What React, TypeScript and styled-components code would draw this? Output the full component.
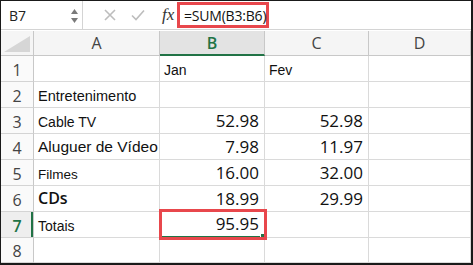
import React from 'react';
import styled, { createGlobalStyle, css } from 'styled-components';

const GlobalStyle = createGlobalStyle`
  html, body {
    margin: 0;
    padding: 0;
    background: #fff;
  }
  body {
    font-family: "Liberation Sans", Arial, sans-serif;
  }
`;

const GREEN = '#217346';
const RED = '#e8474c';

type Variant = 'text' | 'large' | 'num' | 'bold';

interface CellData {
  value: string;
  variant: Variant;
  size?: number;
}

interface RowData {
  n: number;
  a?: CellData;
  b?: CellData;
  c?: CellData;
}

const rows: RowData[] = [
  { n: 1, b: { value: 'Jan', variant: 'text' }, c: { value: 'Fev', variant: 'text' } },
  { n: 2, a: { value: 'Entretenimento', variant: 'large', size: 14.5 } },
  {
    n: 3,
    a: { value: 'Cable TV', variant: 'text' },
    b: { value: '52.98', variant: 'num' },
    c: { value: '52.98', variant: 'num' },
  },
  {
    n: 4,
    a: { value: 'Aluguer de Vídeo', variant: 'large', size: 15.5 },
    b: { value: '7.98', variant: 'num' },
    c: { value: '11.97', variant: 'num' },
  },
  {
    n: 5,
    a: { value: 'Filmes', variant: 'text', size: 13.5 },
    b: { value: '16.00', variant: 'num' },
    c: { value: '32.00', variant: 'num' },
  },
  {
    n: 6,
    a: { value: 'CDs', variant: 'bold' },
    b: { value: '18.99', variant: 'num' },
    c: { value: '29.99', variant: 'num' },
  },
  { n: 7, a: { value: 'Totais', variant: 'text' }, b: { value: '95.95', variant: 'num' } },
  { n: 8 },
];

const columns = ['A', 'B', 'C', 'D'];

export default function App() {
  return (
    <>
      <GlobalStyle />
      <Frame>
        <FormulaBar>
          <NameBox>
            <NameText>B7</NameText>
            <Spinner width="9" height="16" viewBox="0 0 9 16">
              <path d="M4.5 1 L8 6 L1 6 Z" fill="#7a7a7a" />
              <path d="M4.5 15 L8 10 L1 10 Z" fill="#7a7a7a" />
            </Spinner>
          </NameBox>
          <BarIcons>
            <svg width="12" height="12" viewBox="0 0 12 12">
              <path d="M1 1 L11 11 M11 1 L1 11" stroke="#bdbdbd" strokeWidth="1.6" />
            </svg>
            <svg width="14" height="12" viewBox="0 0 14 12">
              <path d="M1 6.5 L5 10.5 L13 1.5" stroke="#bdbdbd" strokeWidth="1.6" fill="none" />
            </svg>
            <Fx>fx</Fx>
          </BarIcons>
          <FormulaInput>
            <FormulaText>=SUM(B3:B6)</FormulaText>
          </FormulaInput>
        </FormulaBar>

        <Sheet>
          <Corner />
          {columns.map((col) => (
            <ColHeader key={col} $active={col === 'B'}>
              {col}
            </ColHeader>
          ))}

          {rows.map((row) => (
            <React.Fragment key={row.n}>
              <RowHeader $active={row.n === 7}>{row.n}</RowHeader>
              {[row.a, row.b, row.c].map((cell, i) => {
                const selected = row.n === 7 && i === 1;
                return (
                  <Cell
                    key={i}
                    $variant={cell?.variant ?? 'text'}
                    $size={cell?.size}
                    $selected={selected}
                  >
                    {cell?.value}
                    {selected && (
                      <>
                        <FillHandle />
                        <Highlight />
                      </>
                    )}
                  </Cell>
                );
              })}
              <Cell $variant="text" />
            </React.Fragment>
          ))}
        </Sheet>
      </Frame>
    </>
  );
}

const Frame = styled.div`
  box-sizing: border-box;
  width: 473px;
  height: 265px;
  border-style: solid;
  border-color: #1a1a1a;
  border-width: 1px 2px 2px 1px;
  display: flex;
  flex-direction: column;
  overflow: hidden;
  background: #fff;
`;

const FormulaBar = styled.div`
  box-sizing: border-box;
  height: 29px;
  flex: none;
  display: flex;
  align-items: stretch;
  border-bottom: 1px solid #d4d4d4;
`;

const NameBox = styled.div`
  box-sizing: border-box;
  width: 82px;
  display: flex;
  align-items: center;
  justify-content: space-between;
  padding: 0 3px 0 8px;
  border-right: 1px solid #d4d4d4;
`;

const NameText = styled.span`
  font-family: "Open Sans", "Noto Sans", sans-serif;
  font-size: 14px;
  color: #222;
`;

const Spinner = styled.svg`
  margin-top: 1px;
`;

const BarIcons = styled.div`
  display: flex;
  align-items: center;
  gap: 15px;
  padding-left: 21px;
  width: 94px;
  box-sizing: border-box;
`;

const Fx = styled.span`
  font-family: "Liberation Serif", "Times New Roman", serif;
  font-style: italic;
  font-size: 17px;
  color: #333;
  margin-left: 2px;
`;

const FormulaInput = styled.div`
  flex: 1;
  display: flex;
  align-items: center;
`;

const FormulaText = styled.span`
  box-sizing: border-box;
  height: 26px;
  width: 92px;
  display: flex;
  align-items: center;
  padding-left: 4px;
  border: 3px solid ${RED};
  font-family: "Open Sans", "Noto Sans", sans-serif;
  font-size: 14px;
  letter-spacing: -0.2px;
  color: #111;
  white-space: nowrap;
`;

const Sheet = styled.div`
  flex: 1;
  margin-top: 1px;
  display: grid;
  grid-template-columns: 33px 126px 105px 104px 1fr;
  grid-template-rows: 25px repeat(7, 26px) 1fr;
`;

const Corner = styled.div`
  box-sizing: border-box;
  background: #f5f5f5;
  border-right: 1px solid #c8c8c8;
  border-bottom: 1px solid #c8c8c8;
  position: relative;

  &::after {
    content: '';
    position: absolute;
    right: 3px;
    bottom: 3px;
    width: 26px;
    height: 16px;
    background: #d6d6d6;
    clip-path: polygon(100% 0, 100% 100%, 0 100%);
  }
`;

const ColHeader = styled.div<{ $active?: boolean }>`
  box-sizing: border-box;
  display: flex;
  align-items: center;
  justify-content: center;
  background: ${(p) => (p.$active ? '#e3e3e3' : '#f5f5f5')};
  border-right: 1px solid #c8c8c8;
  border-bottom: ${(p) => (p.$active ? `2px solid ${GREEN}` : '1px solid #c8c8c8')};
  font-family: "Open Sans", "Noto Sans", sans-serif;
  font-size: 16px;
  font-weight: ${(p) => (p.$active ? 600 : 400)};
  color: ${(p) => (p.$active ? GREEN : '#444')};
`;

const RowHeader = styled.div<{ $active?: boolean }>`
  box-sizing: border-box;
  display: flex;
  align-items: center;
  justify-content: center;
  background: ${(p) => (p.$active ? '#eeeeee' : '#fafafa')};
  border-right: 1px solid #c8c8c8;
  border-bottom: 1px solid #d4d4d4;
  font-family: "Open Sans", "Noto Sans", sans-serif;
  font-size: 16px;
  padding-top: 2px;
  color: ${(p) => (p.$active ? GREEN : '#444')};
  font-weight: ${(p) => (p.$active ? 600 : 400)};
  ${(p) =>
    p.$active &&
    css`
      box-shadow: inset -2px 0 0 ${GREEN};
    `}
`;

const variantStyles = {
  text: css`
    font-family: "Liberation Sans", Arial, sans-serif;
    font-size: 14px;
    justify-content: flex-start;
    padding-left: 4px;
    padding-bottom: 3px;
  `,
  large: css`
    font-family: "Liberation Sans", Arial, sans-serif;
    justify-content: flex-start;
    padding-left: 4px;
    padding-bottom: 3px;
  `,
  num: css`
    font-family: "Open Sans", "Noto Sans", sans-serif;
    font-size: 17px;
    justify-content: flex-end;
    padding-right: 5px;
    padding-bottom: 1px;
  `,
  bold: css`
    font-family: "Open Sans", "Noto Sans", sans-serif;
    font-size: 16px;
    font-weight: 600;
    justify-content: flex-start;
    padding-left: 4px;
    padding-bottom: 2px;
  `,
};

const Cell = styled.div<{ $variant: Variant; $size?: number; $selected?: boolean }>`
  box-sizing: border-box;
  position: relative;
  display: flex;
  align-items: flex-end;
  white-space: nowrap;
  color: #111;
  border-right: 1px solid #dadada;
  border-bottom: ${(p) => (p.$selected ? `2px solid ${GREEN}` : '1px solid #dadada')};
  ${(p) => variantStyles[p.$variant]}
  ${(p) =>
    p.$size &&
    css`
      font-size: ${p.$size}px;
    `}
`;

const FillHandle = styled.span`
  position: absolute;
  right: -3px;
  bottom: -4px;
  width: 5px;
  height: 5px;
  background: ${GREEN};
  border: 1px solid #fff;
  z-index: 2;
`;

const Highlight = styled.span`
  position: absolute;
  left: -1px;
  top: -3px;
  right: -3px;
  bottom: -4px;
  border: 3px solid ${RED};
  pointer-events: none;
  z-index: 3;
`;
